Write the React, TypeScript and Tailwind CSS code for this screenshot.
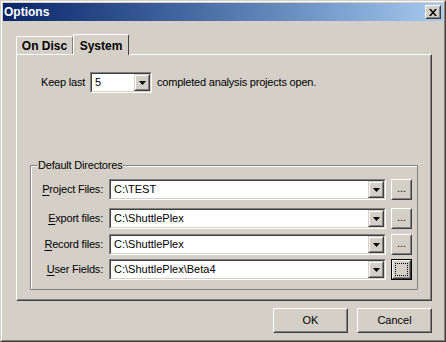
import { ReactNode } from 'react'

const font = { fontFamily: '"Liberation Sans", Arial, sans-serif' }

function Arrow() {
  return (
    <svg width="7" height="4" viewBox="0 0 7 4" className="block">
      <path d="M0 0h7L3.5 4z" fill="#000" />
    </svg>
  )
}

function DropButton() {
  return (
    <div className="w-[16px] h-full border border-t-[#d4d0c8] border-l-[#d4d0c8] border-b-[#404040] border-r-[#404040]">
      <div className="w-full h-full border border-t-white border-l-white border-b-[#808080] border-r-[#808080] bg-[#d4d0c8] flex items-center justify-center">
        <Arrow />
      </div>
    </div>
  )
}

function Combo({ value, width }: { value: string; width: string }) {
  return (
    <div className={`${width} h-[21px] border border-t-[#808080] border-l-[#808080] border-b-white border-r-white`}>
      <div className="w-full h-full border border-t-[#404040] border-l-[#404040] border-b-[#d4d0c8] border-r-[#d4d0c8] bg-white flex">
        <div className="flex-1 pl-[3px] text-[11px] leading-[17px] text-black truncate">{value}</div>
        <DropButton />
      </div>
    </div>
  )
}

function Button({ children, className, focused }: { children: ReactNode; className: string; focused?: boolean }) {
  const inner = (
    <div className="w-full h-full border border-t-white border-l-white border-b-[#404040] border-r-[#404040]">
      <div className="w-full h-full border border-t-[#d4d0c8] border-l-[#d4d0c8] border-b-[#808080] border-r-[#808080] bg-[#d4d0c8] flex items-center justify-center text-[11px] text-black">
        {children}
      </div>
    </div>
  )
  if (focused) {
    return <div className={`${className} border border-black`}>{inner}</div>
  }
  return <div className={className}>{inner}</div>
}

function DirRow({ label, ukey, value, focused, className }: { label: string; ukey: string; value: string; focused?: boolean; className: string }) {
  return (
    <div className={`flex items-center ${className}`}>
      <div className="w-[76px] text-right text-[11px] tracking-[-0.2px] text-black pr-[6px]">
        <span className="underline underline-offset-2">{ukey}</span>
        {label}
      </div>
      <Combo value={value} width="w-[277px]" />
      <Button className="w-[21px] h-[21px] ml-[5px]" focused={focused}>
        {focused ? (
          <div className="w-[13px] h-[13px] border border-dotted border-black" />
        ) : (
          <span className="leading-none pb-[2px]">...</span>
        )}
      </Button>
    </div>
  )
}

export default function App() {
  return (
    <div className="w-[446px] h-[342px] bg-[#d4d0c8] border border-t-[#d4d0c8] border-l-[#d4d0c8] border-b-[#404040] border-r-[#404040]" style={font}>
      <div className="w-full h-full border border-t-white border-l-white border-b-[#808080] border-r-[#808080] p-[1px] flex flex-col">
        {/* title bar */}
        <div className="h-[18px] flex items-center justify-between pl-[1px] pr-[2px] bg-gradient-to-r from-[#0a246a] to-[#a6caf0]">
          <span className="text-white font-bold text-[12px]">Options</span>
          <Button className="w-[16px] h-[14px]">
            <svg width="8" height="7" viewBox="0 0 8 7">
              <path d="M0 0h2l2 2.5L6 0h2L5 3.5 8 7H6L4 4.5 2 7H0l3-3.5z" fill="#000" />
            </svg>
          </Button>
        </div>

        <div className="flex-1 pl-[13px] pt-[13px]">
          {/* tabs */}
          <div className="flex items-end h-[20px]">
            <div className="w-[57px] h-[18px] border-l border-t border-r border-l-white border-t-white border-r-[#808080] rounded-t-[2px] flex items-center justify-center pt-[1px] text-[12px] font-bold text-black">
              On Disc
            </div>
            <div className="relative z-10 mb-[-1px] w-[56px] h-[21px] bg-[#d4d0c8] border-l border-t border-r border-l-white border-t-white border-r-[#404040] rounded-t-[2px] flex items-start justify-center pt-[2px] text-[12px] font-bold text-black">
              System
            </div>
          </div>

          {/* panel */}
          <div className="w-[416px] h-[247px] border border-t-white border-l-white border-b-[#404040] border-r-[#404040]">
            <div className="w-full h-full border border-transparent border-b-[#808080] border-r-[#808080] pt-[16px] px-[12px]">
              <div className="flex items-center pl-[11px] text-[11px] tracking-[-0.2px] text-black">
                <span className="w-[49px]">Keep last</span>
                <Combo value="5" width="w-[62px]" />
                <span className="ml-[5px]">completed analysis projects open.</span>
              </div>

              {/* group box */}
              <div className="mt-[72px] w-[388px] h-[125px] border border-[#808080] relative">
                <div className="w-full h-full border-t border-l border-t-white border-l-white pt-[12px] pl-[1px]">
                  <span className="absolute -top-[7px] left-[6px] bg-[#d4d0c8] px-[1px] text-[11px] tracking-[-0.2px] leading-[13px] text-black">
                    Default Directores
                  </span>
                  <DirRow ukey="P" label="roject Files:" value="C:\TEST" className="" />
                  <DirRow ukey="E" label="xport files:" value="C:\ShuttlePlex" className="mt-[8px]" />
                  <DirRow ukey="R" label="ecord files:" value="C:\ShuttlePlex" className="mt-[5px]" />
                  <DirRow ukey="U" label="ser Fields:" value="C:\ShuttlePlex\Beta4" focused className="mt-[4px]" />
                </div>
              </div>
            </div>
          </div>

          {/* dialog buttons */}
          <div className="flex justify-end gap-[9px] w-[416px] mt-[7px]">
            <Button className="w-[75px] h-[25px]">OK</Button>
            <Button className="w-[75px] h-[25px]">Cancel</Button>
          </div>
        </div>
      </div>
    </div>
  )
}
